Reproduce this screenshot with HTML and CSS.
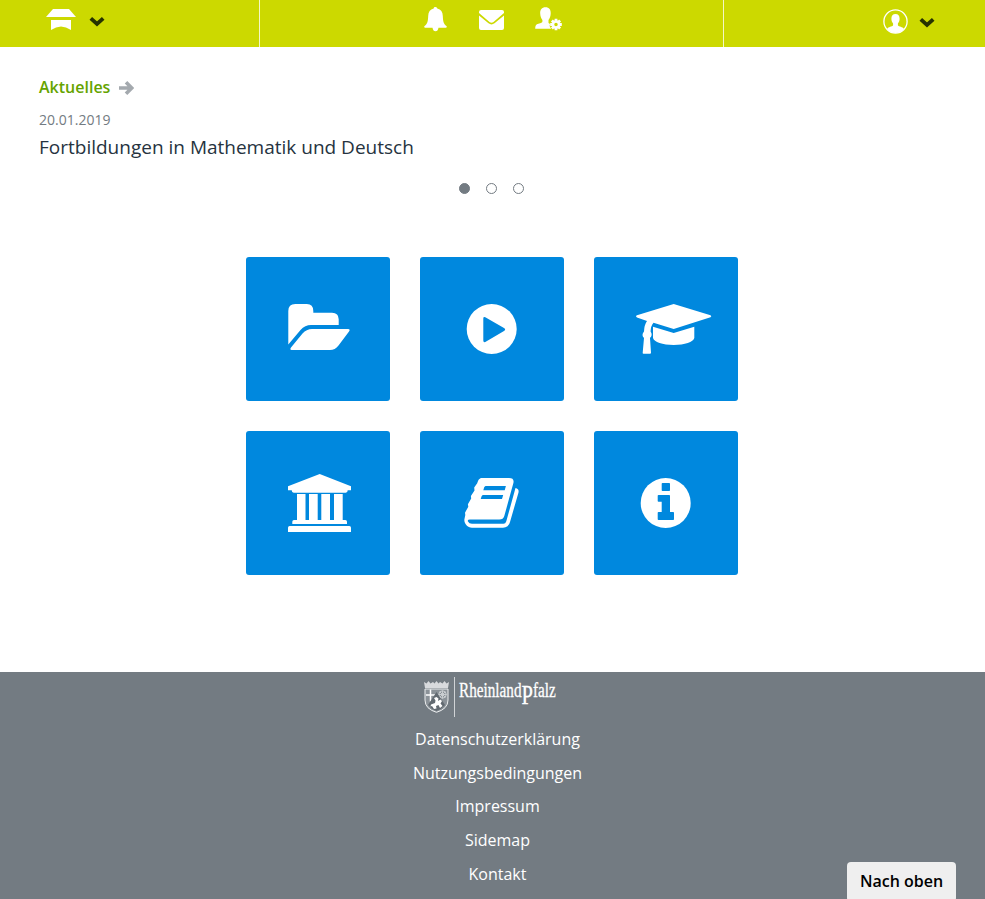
FILE: index.html
```html
<!DOCTYPE html>
<html lang="de">
<head>
<meta charset="utf-8">
<title>Startseite</title>
<link rel="stylesheet" href="styles.css">
</head>
<body>
<header class="topbar">
  <div class="bar-left">
    <svg class="school" width="30" height="22" viewBox="0 0 30 22"><path d="M7 0h16l7 8H0zM5 11h20v10q-10-7-20 0z"/></svg>
    <svg class="chevron" width="16" height="11" viewBox="0 0 16 11"><path d="M1.800 2.400 8 8l6.200-5.600"/></svg>
  </div>
  <nav class="bar-mid">
    <svg width="23" height="25" viewBox="0 0 23 25"><path d="M11.500 0q1.700 0 1.800 1.600C17 2.500 18.700 5 18.800 9c.2 6 1.200 8.500 3.900 10.200.3.900-.2 1.500-1.200 1.500h-7q-.6 3.600-3 3.600t-3-3.600h-7C.5 20.700 0 20.100.3 19.200 3 17.500 4 15 4.200 9 4.300 5 6 2.500 9.700 1.600 9.800 0 10.500 0 11.500 0z"/></svg>
    <svg width="25" height="20" viewBox="0 0 25 20"><path d="M2 0h21q2 0 2 2v1L14.500 12q-2 1.600-4 0L0 3V2Q0 0 2 0zM0 5.400l9.500 7.900q3 2.300 6 0L25 5.400V18q0 2-2 2H2q-2 0-2-2z"/></svg>
    <svg width="27" height="24" viewBox="0 0 27 24"><path d="M10.500.3c3.700 0 5.400 2.500 5.200 6.200-.1 3-1 5-2.200 6.500v3l1.500 1-.4 2 1.500 2.700H.2c0-3 .8-4.300 3.200-4.900 2.700-.7 4-1 4-2.300V13C6.200 11.500 5.300 9.500 5.200 6.500 5 2.800 6.800.3 10.500.3z"/><path class="gear-rim" d="M21 11.700v11.600M15.200 17.500h11.600M16.900 13.400l8.200 8.200M25.100 13.400l-8.200 8.200"/><circle class="gear" cx="21" cy="17.500" r="3"/></svg>
  </nav>
  <div class="bar-right">
    <svg width="25" height="25" viewBox="0 0 25 25"><circle class="ring" cx="12.500" cy="12.500" r="11.600"/><path d="M12.500 5c2.700 0 4.200 1.700 4.100 4.700 0 2.100-.8 3.700-1.700 4.700v1.800c0 1 3.700 1.500 5.300 2.800l.8 1Q17.500 24 12.500 24T4 20l.8-1c1.600-1.300 5.300-1.800 5.300-2.800v-1.800c-.9-1-1.700-2.600-1.700-4.700C8.300 6.700 9.800 5 12.500 5z"/></svg>
    <svg class="chevron" width="16" height="11" viewBox="0 0 16 11"><path d="M1.800 2.400 8 8l6.200-5.600"/></svg>
  </div>
</header>
<main>
  <section class="news">
    <h2>Aktuelles <svg width="15" height="14" viewBox="0 0 15 14"><path d="M0 7h12M7 1.300 12.700 7 7 12.700"/></svg></h2>
    <time>20.01.2019</time>
    <p>Fortbildungen in Mathematik und Deutsch</p>
    <div class="dots"><i class="active"></i><i></i><i></i></div>
  </section>
  <section class="tiles">
    <a><svg viewBox="0 0 144 144"><path d="M42.300 87.500V54q0-7 7-7h11.500q6.500 0 6.500 7v1.700H86q6.700 0 6.700 6.500V68H65q-6 0-10.500 5zM66 72h36q2.700 0 1 2.500L92.500 88.500Q89 93 84 93H45.500q-2-.6-.5-2.600L56.500 76.500Q60.500 72 66 72z"/></svg></a>
    <a><svg viewBox="0 0 144 144"><circle cx="71.700" cy="72" r="25"/><path class="cut" d="M63.300 61.500q0-2 2-1.200L84 71q2.400 1.500 0 3L65.300 85q-2 .6-2-1.400z"/></svg></a>
    <a><svg viewBox="0 0 144 144"><path d="M79.700 47 116.500 58.300q1.600 1 0 2L79.700 72 59.500 65.700Q56.700 69 56.600 74.500 59 78 56 81l1 14.700q0 1-1 1h-6.500q-1 0-.8-1L50 81q-3-3 0-6.500.2-6.500 3-10.500L43 60.500q-2-1.200 0-2.200zM59 69.700 79.700 76l20.600-6.300V81c-1 4-9.500 7-20.600 7S60 85 59 81z"/></svg></a>
    <a><svg viewBox="0 0 144 144"><path d="M73.700 43 105 55.300v4h-3.300q0 2.400-2 2.400h-52q-2 0-2-2.400H42v-4zM51 63h8.500v26H51zM63 63h8.700v26H63zM75.300 63H84v26h-8.700zM88 63h8.700v26H88zM46.300 93v-2.300q0-1.700 1.700-1.700h51.300q1.700 0 1.700 1.700V93zM42 101v-4.300Q42 95 43.700 95h59.600q1.700 0 1.700 1.700v4.300z"/></svg></a>
    <a><svg viewBox="0 0 144 144"><path d="M62 47h27q5.500 0 4.400 5L84.300 85q-1 3.500-5 3.500H50q-3 0-2 2 1 2.300 4 2.300h31.500q2 0 2.800-2.500L95.500 57q3.700.7 3 4.500L90 91q-1.500 5.700-7 5.700H52c-5 0-8.500-5-7.500-9l.8-3.700-.3-2.300 3.300-6-.4-2.500 3.300-5.700-.3-2.500 3.600-5.500-.3-3 3-4.300C58.200 49.500 59 47 62 47z"/><path class="cut" d="M65.500 55h20.400l-1.200 4.300H63.300l1-3.300zM62.800 64h20.400L82 68H60.700l1-3z"/></svg></a>
    <a><svg viewBox="0 0 144 144"><circle cx="71.700" cy="72" r="25"/><path class="cut" d="M67.700 52.800q0-.8.800-.8h6.700q.8 0 .8.800v6.400q0 .8-.8.800h-6.700q-.8 0-.8-.8zM63.700 64.800q0-.8.800-.8h10.700q.8 0 .8.800V81h3.200q.8 0 .8.800v6.400q0 .8-.8.800H64.500q-.8 0-.8-.8v-6.400q0-.8.800-.8h3.200V70.700h-3.200q-.8 0-.8-.8z"/></svg></a>
  </section>
</main>
<footer>
  <div class="brand">
    <svg class="crest" width="25" height="32" viewBox="0 0 25 32"><path class="crown" d="M1 7 0 1l2.500 1.500L4.500 0l2 2.500L9 1l1.500 1.500 2-2.500 2 2.500L16 1l2.500 1.500 2-2.500 2 2.500L25 1l-1 6z"/><path class="shield" d="M1 8h23v11q0 9-11.500 12.300Q1 28 1 19z"/><path class="cross" d="M6.500 8.500v12M2 14h9"/><circle class="wheel" cx="18.500" cy="13.500" r="3.700"/><path class="wheel" d="M18.500 9.500v8M14.500 13.500h8M15.800 10.800l5.400 5.400M21.200 10.800l-5.400 5.400"/><path class="field" d="M12.500 11 21 24q-3 4-8.500 6Q7 28 4 24z"/><path class="lion" d="m10 17 2.500-1 2 1.500-.6 2.500 2.600-1.500L18 20l-1.500 2.500 2 2.500-2.500 2-1.500-3-2.500 1 .5 2.500-2.500.5-2-3-1.500.5.500-2 4-1.500.5-2.500z"/></svg>
    <span class="rule"></span>
    <span class="wordmark"><span>Rheinland</span><span class="big-p">P</span><span>falz</span></span>
  </div>
  <a>Datenschutzerklärung</a>
  <a>Nutzungsbedingungen</a>
  <a>Impressum</a>
  <a>Sidemap</a>
  <a>Kontakt</a>
</footer>
<button class="to-top">Nach oben</button>
</body>
</html>
```
FILE: styles.css
```css
* { box-sizing: border-box; }
body { margin: 0; height: 899px; overflow: hidden; display: flex; flex-direction: column; background: #fff; font-family: "Open Sans", sans-serif; }
svg { display: block; fill: #fff; flex: none; }
.topbar { height: 47px; flex: none; display: grid; grid-template-columns: 260px 464px 1fr; background: #ccd900; }
.topbar > div, .topbar > nav { display: flex; align-items: flex-start; }
.bar-left, .bar-mid { border-right: 1px solid #f4f7c4; }
.bar-left { padding: 9px 0 0 46px; gap: 12.5px; }
.bar-left .chevron { margin-top: 7px; }
.bar-mid { padding: 7px 0 0 164px; }
.bar-mid svg:nth-child(2) { margin: 3px 31px 0 32px; }
.bar-right { padding: 9px 0 0 159px; gap: 10.5px; }
.bar-right .chevron { margin-top: 8px; }
.chevron path { fill: none; stroke: #263300; stroke-width: 3.8; }
.ring { fill: none; stroke: #fff; stroke-width: 1.3; }
.gear-rim { stroke: #fff; stroke-width: 2.8; }
.gear { fill: #ccd900; stroke: #fff; stroke-width: 2.5; }
main { flex: 1; }
.news { padding: 29px 39px 0; }
.news h2 { margin: 0; display: flex; align-items: center; gap: 9px; height: 22px; font-size: 16px; font-weight: 600; line-height: 22px; color: #65a300; }
.news h2 svg { margin-top: 2px; }
.news h2 path { fill: none; stroke: #a4a9ae; stroke-width: 3.6; }
.news time { display: block; margin-top: 12px; font-size: 14px; line-height: 20px; color: #737b82; }
.news p { margin: 4px 0 0; font-size: 19px; line-height: 26px; color: #263340; }
.dots { display: flex; gap: 16px; padding: 23px 0 0 420px; }
.dots i { width: 11px; height: 11px; border: 1px solid #737b82; border-radius: 50%; }
.dots .active { background: #737b82; }
.tiles { display: grid; grid-template-columns: repeat(3, 144px); gap: 30px; margin: 63px 0 0 246px; }
.tiles a { height: 144px; background: #0088de; border-radius: 3px; }
.cut { fill: #0088de; }
footer { height: 227px; flex: none; display: flex; flex-direction: column; align-items: center; padding: 5px 0 0 10px; background: #737b82; }
footer a { margin-bottom: 10.7px; font-size: 16px; line-height: 23px; color: #fff; }
.brand { width: 131px; height: 40px; margin: 0 16px 11px 0; display: flex; align-items: flex-start; }
.crest { margin-top: 4px; }
.crown { fill: #d8dadd; }
.shield { fill: #8b9298; stroke: #eceeef; stroke-width: 1; }
.cross { stroke: #fff; stroke-width: 1.5; }
.wheel { fill: none; stroke: #c9cdd0; stroke-width: 1; }
.field { fill: #626a71; }
.rule { flex: none; width: 1px; height: 40px; margin: 0 4px 0 5px; background: #d0d3d6; }
.wordmark { flex: none; display: flex; align-items: flex-start; font: 20px/26px "Liberation Serif", serif; color: #fff; -webkit-text-stroke: .3px #fff; transform: scaleX(.76); transform-origin: 0 0; }
.big-p { margin-top: 3px; font-size: 27px; line-height: 30px; }
.to-top { position: fixed; left: 847px; top: 862px; width: 109px; height: 40px; padding: 0 0 2px; border: 0; border-radius: 4px; background: #efefef; color: #000; font: 600 16px/22px "Open Sans", sans-serif; }
```
